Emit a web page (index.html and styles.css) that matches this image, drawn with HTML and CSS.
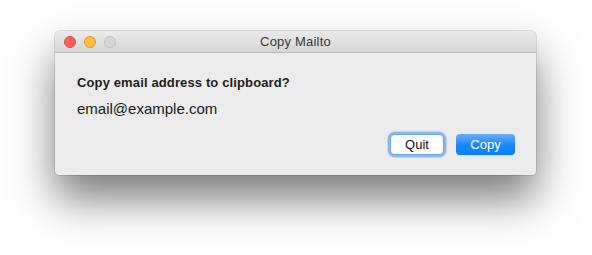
FILE: index.html
```html
<!DOCTYPE html>
<html>
<head>
<meta charset="utf-8">
<link rel="stylesheet" href="styles.css">
</head>
<body>
<div class="window">
  <div class="titlebar">
    <div class="lights">
      <span class="light red"></span>
      <span class="light yellow"></span>
      <span class="light gray"></span>
    </div>
    <div class="title">Copy Mailto</div>
    <div></div>
  </div>
  <div class="content">
    <div class="message">Copy email address to clipboard?</div>
    <div class="email">email@example.com</div>
    <div class="buttons">
      <button class="btn quit">Quit</button>
      <button class="btn copy">Copy</button>
    </div>
  </div>
</div>
</body>
</html>
```

FILE: styles.css
```css
html, body {
  margin: 0;
  padding: 0;
  background: #ffffff;
  width: 592px;
  height: 255px;
  overflow: hidden;
  font-family: "Liberation Sans", Arial, sans-serif;
}

.window {
  margin: 31px 0 0 55px;
  width: 481px;
  height: 144px;
  background: #ececec;
  border-radius: 5px 5px 4px 4px;
  box-shadow: 0 0 0 0.5px rgba(0,0,0,0.22), 0 24px 44px rgba(0,0,0,0.52);
  display: flex;
  flex-direction: column;
  overflow: hidden;
}

.titlebar {
  height: 21px;
  border-bottom: 1px solid #bdbdbd;
  background: linear-gradient(#ebebeb, #d5d5d5);
  display: grid;
  grid-template-columns: 1fr auto 1fr;
  align-items: center;
}

.lights {
  display: flex;
  gap: 8px;
  padding-left: 9px;
}

.light {
  width: 12px;
  height: 12px;
  border-radius: 50%;
  box-sizing: border-box;
}

.red {
  background: #fc605c;
  border: 0.5px solid #df4744;
}

.yellow {
  background: #fdbc40;
  border: 0.5px solid #de9e33;
}

.gray {
  background: #d6d6d6;
  border: 1px solid #c4c4c4;
}

.title {
  font-size: 13px;
  letter-spacing: 0.2px;
  color: #383838;
  line-height: 21px;
}

.content {
  padding: 22px 21px 0 22px;
  display: flex;
  flex-direction: column;
}

.message {
  font-size: 13px;
  font-weight: bold;
  letter-spacing: 0.13px;
  line-height: 16px;
  color: #1e1e1e;
}

.email {
  margin-top: 9px;
  font-size: 15px;
  line-height: 18px;
  color: #1a1a1a;
}

.buttons {
  margin-top: 16px;
  display: flex;
  justify-content: flex-end;
  align-items: center;
  gap: 13px;
}

.btn {
  font-family: "Liberation Sans", Arial, sans-serif;
  font-size: 13px;
  padding: 0;
  border: none;
  border-radius: 4px;
  box-sizing: border-box;
  line-height: 1;
}

.quit {
  width: 52px;
  height: 19px;
  background: #ffffff;
  color: #111111;
  box-shadow: 0 0 0 1px #6aa8ee, 0 0 0 3.5px rgba(110, 170, 240, 0.75);
}

.copy {
  width: 59px;
  height: 21px;
  color: #ffffff;
  background: linear-gradient(#67b0fb, #1a86fd 55%, #0b7ffe);
  box-shadow: 0 0.5px 0 rgba(0,0,0,0.15);
}
```
